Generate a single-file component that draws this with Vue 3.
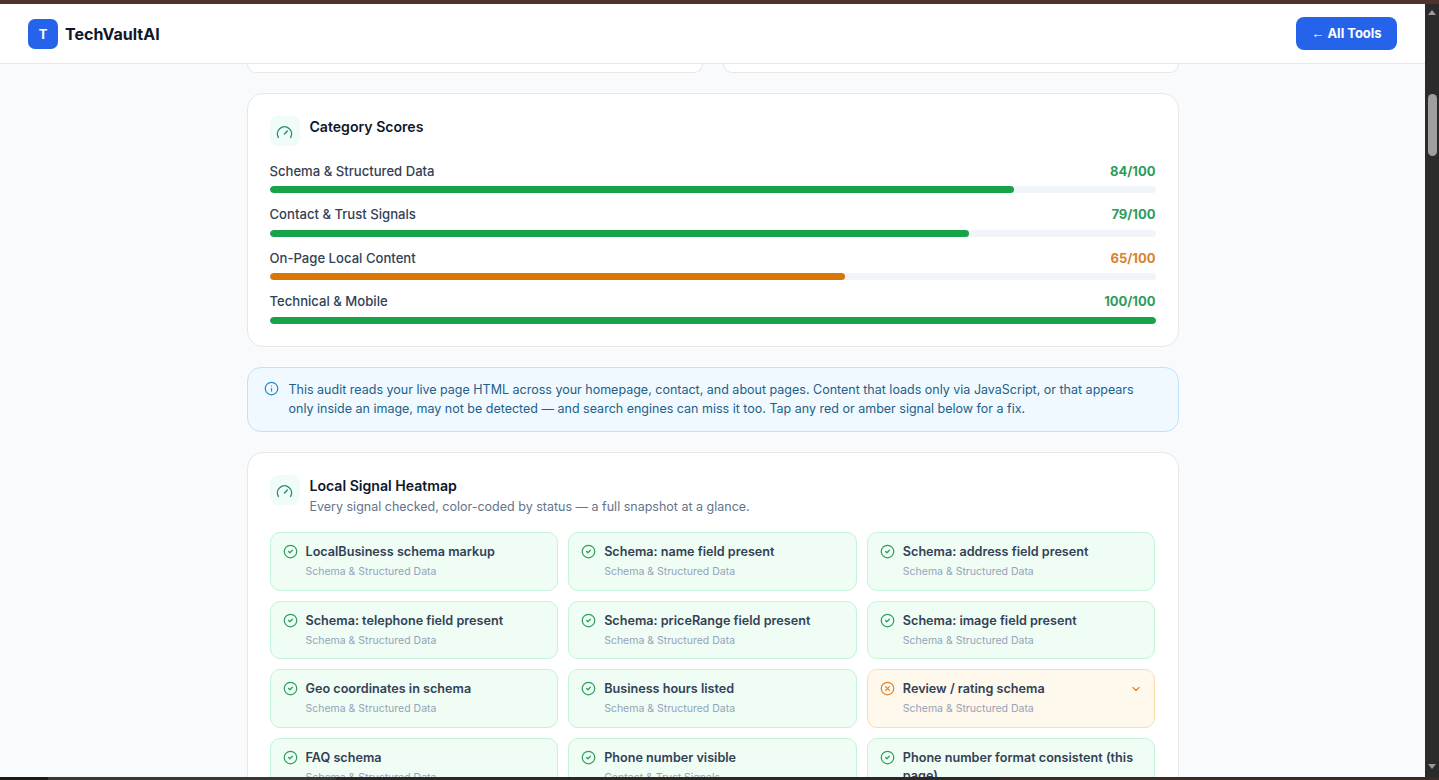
<script setup>
const scores = [
  { name: 'Schema & Structured Data', value: 84 },
  { name: 'Contact & Trust Signals', value: 79 },
  { name: 'On-Page Local Content', value: 65 },
  { name: 'Technical & Mobile', value: 100 },
]

const signals = [
  { title: 'LocalBusiness schema markup', group: 'Schema & Structured Data' },
  { title: 'Schema: name field present', group: 'Schema & Structured Data' },
  { title: 'Schema: address field present', group: 'Schema & Structured Data' },
  { title: 'Schema: telephone field present', group: 'Schema & Structured Data' },
  { title: 'Schema: priceRange field present', group: 'Schema & Structured Data' },
  { title: 'Schema: image field present', group: 'Schema & Structured Data' },
  { title: 'Geo coordinates in schema', group: 'Schema & Structured Data' },
  { title: 'Business hours listed', group: 'Schema & Structured Data' },
  { title: 'Review / rating schema', group: 'Schema & Structured Data', warn: true },
  { title: 'FAQ schema', group: 'Schema & Structured Data' },
  { title: 'Phone number visible', group: 'Contact & Trust Signals' },
  { title: 'Phone number format consistent (this page)', group: 'Contact & Trust Signals' },
]

const scoreTone = (value) => (value >= 70 ? 'good' : 'warn')
</script>

<template>
  <div class="window">
    <div class="top-strip"></div>
    <div class="viewport">
      <div class="page">
        <header class="topbar">
          <div class="brand">
            <span class="brand-mark">T</span>
            <span class="brand-name">TechVaultAI</span>
          </div>
          <button class="back-btn"><span class="back-arrow">←</span> All Tools</button>
        </header>

        <main class="content">
          <div class="prev-row">
            <div class="prev-card"></div>
            <div class="prev-card"></div>
          </div>

          <section class="card">
            <div class="card-head">
              <span class="head-icon">
                <svg viewBox="0 0 24 24" width="17" height="17" fill="none" stroke="currentColor" stroke-width="2" stroke-linecap="round" stroke-linejoin="round">
                  <path d="m12 14 4-4" />
                  <path d="M3.34 19a10 10 0 1 1 17.32 0" />
                </svg>
              </span>
              <div>
                <h2 class="card-title">Category Scores</h2>
              </div>
            </div>
            <div v-for="s in scores" :key="s.name" class="score">
              <div class="score-line">
                <span class="score-name">{{ s.name }}</span>
                <span :class="['score-value', scoreTone(s.value)]">{{ s.value }}/100</span>
              </div>
              <div class="track">
                <div :class="['fill', scoreTone(s.value)]" :style="{ width: s.value + '%' }"></div>
              </div>
            </div>
          </section>

          <div class="notice">
            <svg class="notice-icon" viewBox="0 0 24 24" width="15" height="15" fill="none" stroke="currentColor" stroke-width="2" stroke-linecap="round" stroke-linejoin="round">
              <circle cx="12" cy="12" r="10" />
              <path d="M12 16v-4" />
              <path d="M12 8h.01" />
            </svg>
            <p>This audit reads your live page HTML across your homepage, contact, and about pages. Content that loads only via JavaScript, or that appears only inside an image, may not be detected — and search engines can miss it too. Tap any red or amber signal below for a fix.</p>
          </div>

          <section class="card">
            <div class="card-head">
              <span class="head-icon">
                <svg viewBox="0 0 24 24" width="17" height="17" fill="none" stroke="currentColor" stroke-width="2" stroke-linecap="round" stroke-linejoin="round">
                  <path d="m12 14 4-4" />
                  <path d="M3.34 19a10 10 0 1 1 17.32 0" />
                </svg>
              </span>
              <div>
                <h2 class="card-title">Local Signal Heatmap</h2>
                <p class="card-sub">Every signal checked, color-coded by status — a full snapshot at a glance.</p>
              </div>
            </div>
            <div class="signal-grid">
              <div v-for="sig in signals" :key="sig.title" :class="['signal', { warn: sig.warn }]">
                <svg v-if="sig.warn" class="signal-icon" viewBox="0 0 24 24" width="15" height="15" fill="none" stroke="currentColor" stroke-width="2" stroke-linecap="round" stroke-linejoin="round">
                  <circle cx="12" cy="12" r="10" />
                  <path d="m15 9-6 6" />
                  <path d="m9 9 6 6" />
                </svg>
                <svg v-else class="signal-icon" viewBox="0 0 24 24" width="15" height="15" fill="none" stroke="currentColor" stroke-width="2" stroke-linecap="round" stroke-linejoin="round">
                  <circle cx="12" cy="12" r="10" />
                  <path d="m9 12 2 2 4-4" />
                </svg>
                <div class="signal-text">
                  <div class="signal-title">{{ sig.title }}</div>
                  <div class="signal-group">{{ sig.group }}</div>
                </div>
                <svg v-if="sig.warn" class="chevron" viewBox="0 0 24 24" width="12" height="12" fill="none" stroke="currentColor" stroke-width="2.4" stroke-linecap="round" stroke-linejoin="round">
                  <path d="m6 9 6 6 6-6" />
                </svg>
              </div>
            </div>
          </section>
        </main>
      </div>

      <aside class="scrollbar">
        <span class="arrow up"></span>
        <span class="thumb"></span>
        <span class="arrow down"></span>
      </aside>
    </div>
    <div class="bottom-strip"></div>
  </div>
</template>

<style>
html,
body {
  margin: 0;
  overflow: hidden;
}
</style>

<style scoped>
.window {
  width: 1439px;
  height: 780px;
  display: flex;
  flex-direction: column;
  overflow: hidden;
  font-family: Inter, 'Liberation Sans', sans-serif;
}

.top-strip {
  height: 4px;
  flex: none;
  background: #50332f;
}

.bottom-strip {
  height: 3px;
  flex: none;
  background: linear-gradient(90deg, #1c1a19 0 48px, #3a3634 48px 336px, #2c2624 336px 1000px, #3b2a26 1000px);
}

.viewport {
  flex: 1;
  min-height: 0;
  display: flex;
}

.page {
  flex: 1;
  min-width: 0;
  overflow: hidden;
  background: #f8fafc;
}

.scrollbar {
  width: 14px;
  flex: none;
  background: #2b2b2b;
  display: flex;
  flex-direction: column;
  align-items: center;
  padding: 6px 0;
  box-sizing: border-box;
}

.arrow {
  width: 0;
  height: 0;
  border-left: 4px solid transparent;
  border-right: 4px solid transparent;
}

.arrow.up {
  border-bottom: 5px solid #9a9a9a;
}

.arrow.down {
  margin-top: auto;
  margin-bottom: 2px;
  border-top: 5px solid #9a9a9a;
}

.thumb {
  width: 9px;
  height: 62px;
  margin-top: 79px;
  border-radius: 5px;
  background: #9f9f9f;
}

.topbar {
  height: 59px;
  display: flex;
  align-items: center;
  justify-content: space-between;
  padding: 0 28px;
  background: #fff;
  border-bottom: 1px solid #e5e7eb;
}

.brand {
  display: flex;
  align-items: center;
  gap: 7px;
}

.brand-mark {
  width: 30px;
  height: 30px;
  border-radius: 7px;
  background: #2563eb;
  color: #fff;
  font-size: 13px;
  font-weight: 700;
  display: flex;
  align-items: center;
  justify-content: center;
}

.brand-name {
  font-size: 16px;
  font-weight: 700;
  color: #0f172a;
}

.back-btn {
  height: 33px;
  width: 101px;
  border: 0;
  border-radius: 8px;
  background: #2563eb;
  color: #fff;
  font-family: inherit;
  font-size: 13px;
  font-weight: 700;
  padding: 0 0 2px;
}

.back-arrow {
  font-family: 'Liberation Sans', sans-serif;
  font-weight: 400;
}

.content {
  width: 932px;
  margin: 0 auto;
  display: flex;
  flex-direction: column;
  gap: 20px;
}

.prev-row {
  display: grid;
  grid-template-columns: 1fr 1fr;
  gap: 20px;
}

.prev-card {
  height: 8px;
  background: #fff;
  border: 1px solid #e5e7eb;
  border-top: 0;
  border-radius: 0 0 16px 16px;
}

.card {
  background: #fff;
  border: 1px solid #e5e7eb;
  border-radius: 16px;
  padding: 22px;
}

.card-head {
  display: flex;
  align-items: flex-start;
  gap: 10px;
  margin-bottom: 16px;
}

.card-head + .score {
  margin-top: -0.5px;
}

.head-icon {
  width: 30px;
  height: 30px;
  flex: none;
  border-radius: 8px;
  background: #effcf8;
  color: #2b8a80;
  display: flex;
  align-items: center;
  justify-content: center;
}

.head-icon svg {
  margin-top: 2px;
}

.card-title {
  margin: 0;
  font-size: 14.08px;
  line-height: 22px;
  font-weight: 600;
  color: #0f172a;
}

.card-sub {
  margin: 0;
  font-size: 12.5px;
  line-height: 19px;
  color: #64748b;
}

.score + .score {
  margin-top: 12px;
}

.score:last-child {
  margin-bottom: 0.5px;
}

.score-line {
  display: flex;
  justify-content: space-between;
  line-height: 18.5px;
  font-size: 13.12px;
  margin-bottom: 6px;
}

.score-name {
  font-weight: 500;
  color: #334155;
}

.score-value {
  font-size: 13px;
  font-weight: 700;
}

.score-value.good {
  color: #2b9c5c;
}

.score-value.warn {
  color: #d9822b;
}

.track {
  height: 7px;
  border-radius: 4px;
  background: #f1f5f9;
  overflow: hidden;
}

.fill {
  height: 100%;
  border-radius: 4px;
}

.fill.good {
  background: #16a34a;
}

.fill.warn {
  background: #d97706;
}

.notice {
  display: flex;
  gap: 10px;
  align-items: flex-start;
  padding: 12px 16px 13px;
  background: #f0f9ff;
  border: 1px solid #bfe3f7;
  border-radius: 14px;
  color: #235f88;
}

.notice-icon {
  flex: none;
  margin-top: 1px;
  color: #2f86c9;
}

.notice p {
  margin: 0;
  font-size: 12.5px;
  line-height: 19px;
}

.signal-grid {
  display: grid;
  grid-template-columns: repeat(3, 1fr);
  gap: 10px;
}

.signal {
  display: flex;
  align-items: flex-start;
  gap: 8px;
  min-height: 58.5px;
  box-sizing: border-box;
  padding: 10px 12px;
  background: #effdf5;
  border: 1px solid #c3f3d8;
  border-radius: 10px;
  color: #2f9e5f;
}

.signal.warn {
  background: #fff8ec;
  border-color: #fddcb0;
  color: #dd8430;
}

.signal-icon {
  flex: none;
  margin-top: 1px;
}

.signal-text {
  flex: 1;
  min-width: 0;
}

.signal-title {
  font-size: 12.64px;
  line-height: 18px;
  font-weight: 600;
  color: #334155;
}

.signal-group {
  margin-top: 4px;
  font-size: 10.5px;
  line-height: 14px;
  color: #94a3b8;
}

.chevron {
  flex: none;
  margin-top: 3px;
}
</style>
